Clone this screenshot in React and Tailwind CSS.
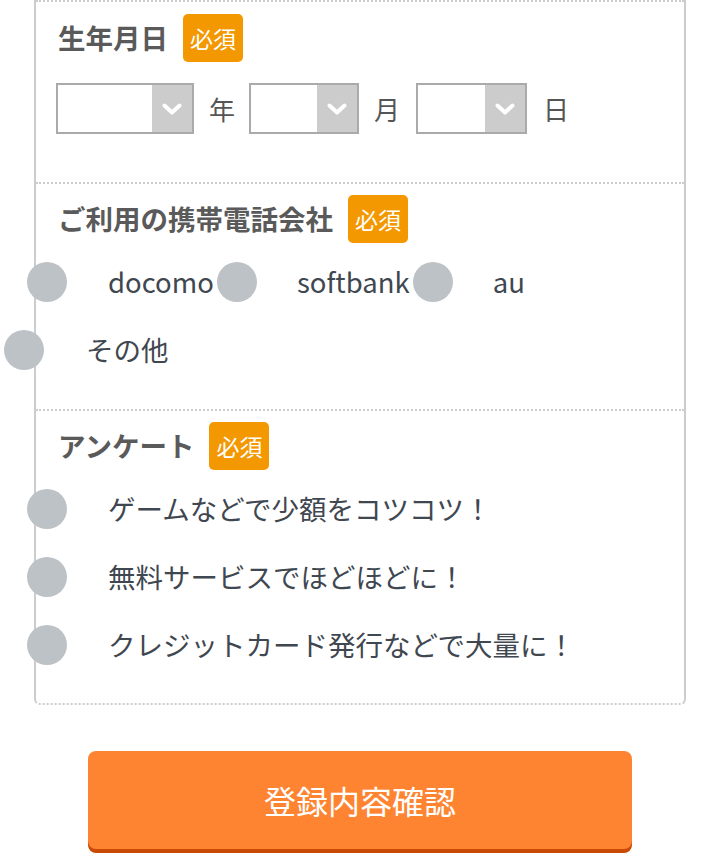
import React from "react";

const font = { fontFamily: '"Noto Sans CJK JP", "Noto Sans", sans-serif' };

function Badge() {
  return (
    <span className="inline-flex h-[48px] w-[60px] items-center justify-center rounded-[5px] bg-[#f39800] text-[23px] leading-none text-white">
      必須
    </span>
  );
}

function Title({ children }) {
  return (
    <div className="flex h-[48px] items-center gap-[15px]">
      <span className="text-[27.5px] font-bold leading-none text-[#5a5a5a]">{children}</span>
      <Badge />
    </div>
  );
}

function Chevron() {
  return (
    <svg width="20" height="12" viewBox="0 0 20 12" fill="none">
      <path d="M2.5 2.5 L10 9.5 L17.5 2.5" stroke="#fff" strokeWidth="4" strokeLinecap="round" strokeLinejoin="round" />
    </svg>
  );
}

function Select({ w }) {
  return (
    <div className={`flex h-[51px] ${w} border-2 border-[#aaa] bg-white`}>
      <div className="flex-1" />
      <div className="flex w-[40px] items-center justify-center bg-[#ccc]">
        <Chevron />
      </div>
    </div>
  );
}

function Radio({ label, gap = "ml-[41px]" }) {
  return (
    <div className="flex h-[68px] items-center">
      <span className="h-[40px] w-[40px] shrink-0 rounded-full bg-[#bdc2c7]" />
      <span className={`${gap} text-[27.5px] leading-none text-[#3f4750]`}>{label}</span>
    </div>
  );
}

export default function App() {
  return (
    <div className="min-h-[863px] bg-white" style={font}>
      <div className="mx-[34px] rounded-b-[6px] border-x-2 border-b-2 border-solid border-[#ccc] [border-bottom-style:dotted]">
        {/* 生年月日 */}
        <section className="border-t-2 border-dotted border-[#ccc] pb-[48px] pl-[22px] pt-[12px]">
          <Title>生年月日</Title>
          <div className="mt-[21px] flex items-center -ml-[2px]">
            <Select w="w-[138px]" />
            <span className="ml-[15px] mr-[14px] text-[26px] leading-none text-[#555]">年</span>
            <Select w="w-[110px]" />
            <span className="ml-[15px] mr-[16px] text-[26px] leading-none text-[#555]">月</span>
            <Select w="w-[111px]" />
            <span className="ml-[16px] text-[26px] leading-none text-[#555]">日</span>
          </div>
        </section>

        {/* 携帯電話会社 */}
        <section className="border-t-2 border-dotted border-[#ccc] pb-[25px] pl-[22px] pt-[11px]">
          <Title>ご利用の携帯電話会社</Title>
          <div className="mt-[5px]">
            <div className="flex items-center gap-[3px] -ml-[31px]">
              <Radio label="docomo" />
              <Radio label="softbank" gap="ml-[40px]" />
              <Radio label="au" gap="ml-[40px]" />
            </div>
            <div className="flex -ml-[54px]">
              <Radio label="その他" gap="ml-[42px]" />
            </div>
          </div>
        </section>

        {/* アンケート */}
        <section className="border-t-2 border-dotted border-[#ccc] pb-[24px] pl-[22px] pt-[11px]">
          <Title>アンケート</Title>
          <div className="mt-[5px] -ml-[31px]">
            <Radio label="ゲームなどで少額をコツコツ！" />
            <Radio label="無料サービスでほどほどに！" />
            <Radio label="クレジットカード発行などで大量に！" />
          </div>
        </section>
      </div>

      <div className="mt-[46px] flex justify-center">
        <button className="flex h-[98px] w-[544px] items-center justify-center rounded-[8px] bg-[#fe8432] text-[32px] leading-none text-white shadow-[0_4px_0_#c84a05]">
          登録内容確認
        </button>
      </div>
    </div>
  );
}
